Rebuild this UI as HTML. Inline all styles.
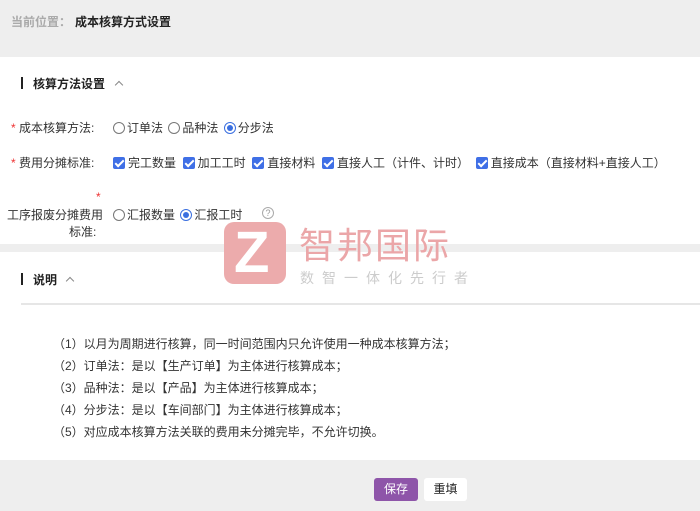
<!DOCTYPE html>
<html><head><meta charset="utf-8"><style>
*{margin:0;padding:0;box-sizing:border-box}
body{width:700px;height:511px;overflow:hidden;background:#fff;font-family:"Liberation Sans","Noto Sans CJK SC",sans-serif;font-size:12px;color:#333;position:relative}
.a{position:absolute;white-space:nowrap}
.r{display:inline-block;width:12px;height:12px;border:1px solid #777;border-radius:50%;vertical-align:-2px;margin-right:2px;position:relative}
.r.on{border-color:#3a6fe0}
.r.on:after{content:"";position:absolute;left:2px;top:2px;width:6px;height:6px;border-radius:50%;background:#3a6fe0}
.c{display:inline-block;width:12px;height:12px;background:#3f6fe6;border-radius:2px;vertical-align:-2px;margin-right:3px;position:relative}
.c:after{content:"";position:absolute;left:4px;top:1px;width:3px;height:7px;border:solid #fff;border-width:0 2px 2px 0;transform:rotate(45deg)}
.req{color:#e33}
.bar{position:absolute;width:2px;height:12px;background:#222}
.chev{position:absolute;width:6px;height:6px;border-left:1px solid #888;border-top:1px solid #888;transform:rotate(45deg)}
</style></head><body>
<div class="a" style="left:0;top:0;width:700px;height:57px;background:#eeeeee"></div>
<div class="a" style="left:11px;top:13px;font-size:12px;font-weight:bold;color:#aaa">当前位置：<span style="color:#222;margin-left:4px">成本核算方式设置</span></div>

<div class="bar" style="left:21px;top:77px"></div>
<div class="a" style="left:33px;top:75px;font-weight:bold;color:#222">核算方法设置</div>
<div class="chev" style="left:116px;top:82px"></div>

<div class="a" style="left:11px;top:119px"><span class="req">*</span> 成本核算方法:</div>
<div class="a" style="left:113px;top:119px"><span class="r"></span>订单法 <span class="r" style="margin-left:2px"></span>品种法 <span class="r on" style="margin-left:2px"></span>分步法</div>

<div class="a" style="left:11px;top:154px"><span class="req">*</span> 费用分摊标准:</div>
<div class="a" style="left:113px;top:154px"><span class="c"></span>完工数量 &nbsp;<span class="c"></span>加工工时 &nbsp;<span class="c"></span>直接材料 &nbsp;<span class="c"></span>直接人工（计件、计时） &nbsp;<span class="c"></span>直接成本（直接材料+直接人工）</div>

<div class="a req" style="left:96px;top:190px">*</div>
<div class="a" style="left:7px;top:206px">工序报废分摊费用</div>
<div class="a" style="left:69px;top:223px">标准:</div>
<div class="a" style="left:113px;top:206px"><span class="r"></span>汇报数量 <span class="r on" style="margin-left:2px"></span>汇报工时</div>
<div class="a" style="left:262px;top:207px;width:12px;height:12px;border:1px solid #aaa;border-radius:50%;font-size:9px;line-height:10px;text-align:center;color:#999">?</div>

<div class="a" style="left:0;top:244px;width:700px;height:8px;background:#eeeeee"></div>

<div class="bar" style="left:21px;top:273px"></div>
<div class="a" style="left:33px;top:271px;font-weight:bold;color:#222">说明</div>
<div class="chev" style="left:67px;top:278px"></div>
<div class="a" style="left:21px;top:303px;width:679px;height:2px;background:#e6e6e6"></div>

<div class="a" style="left:53px;top:333px;line-height:22px">（1）以月为周期进行核算，同一时间范围内只允许使用一种成本核算方法；<br>（2）订单法：是以【生产订单】为主体进行核算成本；<br>（3）品种法：是以【产品】为主体进行核算成本；<br>（4）分步法：是以【车间部门】为主体进行核算成本；<br>（5）对应成本核算方法关联的费用未分摊完毕，不允许切换。</div>

<div class="a" style="left:224px;top:222px;width:62px;height:62px;background:#eba6a8;border-radius:10px;opacity:.95"></div>
<div class="a" style="left:234px;top:222px;font-size:58px;font-weight:bold;color:#fff;line-height:62px">Z</div>
<div class="a" style="left:299px;top:225px;font-size:36px;color:#eba6a8;letter-spacing:2px;line-height:42px">智邦国际</div>
<div class="a" style="left:300px;top:268px;font-size:14px;color:#ccc;letter-spacing:8px">数智一体化先行者</div>

<div class="a" style="left:0;top:460px;width:700px;height:51px;background:#eeeeee"></div>
<div class="a" style="left:374px;top:478px;width:44px;height:23px;background:#8e55a9;border-radius:3px;color:#fff;text-align:center;line-height:23px">保存</div>
<div class="a" style="left:424px;top:478px;width:43px;height:23px;background:#fff;border-radius:3px;color:#222;text-align:center;line-height:23px">重填</div>
</body></html>
